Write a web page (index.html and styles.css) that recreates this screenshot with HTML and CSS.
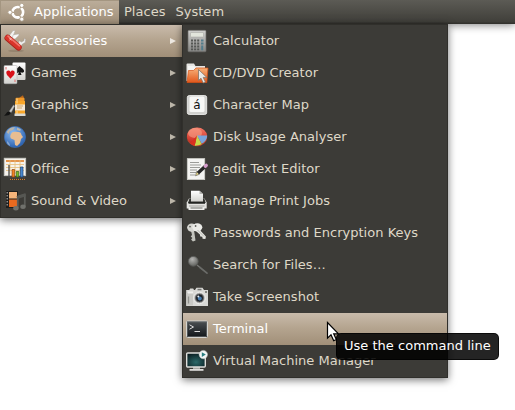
FILE: index.html
```html
<!DOCTYPE html>
<html lang="en">
<head>
<meta charset="utf-8">
<title>Desktop menu</title>
<link rel="stylesheet" href="styles.css">
</head>
<body>
<svg class="defs" width="0" height="0" aria-hidden="true">
  <defs>
    <linearGradient id="red" x1="0" y1="0" x2="0" y2="1"><stop offset="0" stop-color="#f47a68"/><stop offset="1" stop-color="#c42018"/></linearGradient>
    <linearGradient id="orange" x1="0" y1="0" x2="0" y2="1"><stop offset="0" stop-color="#f7b27a"/><stop offset="1" stop-color="#e2571c"/></linearGradient>
    <linearGradient id="grey" x1="0" y1="0" x2="0" y2="1"><stop offset="0" stop-color="#d0d0ce"/><stop offset="1" stop-color="#858583"/></linearGradient>
    <linearGradient id="light" x1="0" y1="0" x2="0" y2="1"><stop offset="0" stop-color="#fff"/><stop offset="1" stop-color="#d2d2ce"/></linearGradient>
    <linearGradient id="dark" x1="0" y1="0" x2="0" y2="1"><stop offset="0" stop-color="#4c5154"/><stop offset="1" stop-color="#101418"/></linearGradient>
    <radialGradient id="lens" cx=".4" cy=".3" r=".7"><stop offset="0" stop-color="#b4b4b2"/><stop offset="1" stop-color="#62635f"/></radialGradient>
    <radialGradient id="blue" cx=".4" cy=".3" r=".75"><stop offset="0" stop-color="#8ebcf0"/><stop offset="1" stop-color="#245bab"/></radialGradient>
    <radialGradient id="teal" cx=".5" cy=".65" r=".7"><stop offset="0" stop-color="#2c6a6a"/><stop offset="1" stop-color="#07181c"/></radialGradient>
  </defs>
</svg>

<header class="panel">
  <div class="panel-item active">
    <svg class="logo" viewBox="0 0 20 20">
      <circle cx="10.8" cy="10.3" r="5.2" fill="none" stroke="#fff" stroke-width="2.900"/>
      <path d="M10.800 10.300H2M10.800 10.300l4.200-7.500M10.800 10.300l4.200 7.500" stroke="#b0a08b" stroke-width="1.200"/>
      <circle cx="10.800" cy="10.300" r="3.700" fill="#b0a08b"/>
      <g fill="#fff" stroke="#b0a08b" stroke-width=".9"><circle cx="3" cy="10.300" r="2.100"/><circle cx="14.800" cy="3.400" r="2.100"/><circle cx="14.800" cy="17.200" r="2.100"/></g>
    </svg>
    <span>Applications</span>
  </div>
  <div class="panel-item">Places</div>
  <div class="panel-item">System</div>
</header>

<nav class="menu main-menu">
  <div class="row selected">
    <svg class="icon" viewBox="0 0 24 24">
      <path d="M6 7l4-5.500q1.500-.5 2 .8L9.500 9z" fill="#f2f2f1" stroke="#a8a39c" stroke-width=".5"/>
      <path d="M9.500 9.500l.5-3.500 5.500-1q1 .8 0 1.800L12 10z" fill="#f8f8f7" stroke="#aaa" stroke-width=".4"/>
      <path d="M15.500 15.500l.5-4 2.500 1.500 2.500-1.500.2-2.500 1.500 1.500-.5 3-3 1.800-1.500 2.700z" fill="#ededeb" stroke="#a09b94" stroke-width=".5"/>
      <ellipse cx="13" cy="21.800" rx="8" ry="1.300" fill="#5b4a3c" opacity=".25"/>
      <path d="M4.700 9L15.500 18.300" stroke="#a3241c" stroke-width="6.400" stroke-linecap="round"/>
      <path d="M4.700 8.700L15.700 18" stroke="#d9342b" stroke-width="5.200" stroke-linecap="round"/>
      <path d="M5 7.200L16.500 16.800" stroke="#f0766b" stroke-width="1.600" stroke-linecap="round"/>
      <path d="M6.300 9.200l2.400 2M8.400 9L6.500 11.400" stroke="#f7c8c0" stroke-width=".8"/>
    </svg>
    <span>Accessories</span><i class="arrow"></i>
  </div>
  <div class="row">
    <svg class="icon" viewBox="0 0 24 24">
      <rect x="9.500" y="1.500" width="13" height="17.500" rx="1" fill="url(#light)"/>
      <path d="M16.500 5c-2 2.500-4 3.300-4 5.300 0 2 2.500 2.200 3.500.8L15 14h3.500l-1-3c1.500 1.400 3.600.7 3.600-1 0-2-2.600-2.800-4.600-5z" fill="#151515"/>
      <rect x="1" y="4.500" width="13" height="18.200" rx="1" fill="url(#light)" stroke="#aaa" stroke-width=".5"/>
      <path d="M7.500 17.700C5 15 3.300 13.700 3.300 11.800c0-2.500 3.100-3 4.200-.8 1.100-2.200 4.200-1.700 4.200.8 0 1.900-1.700 3.200-4.200 5.900z" fill="#d91119"/>
      <path d="M3 6v2.500M12 18.500V21" stroke="#e06a6a"/>
    </svg>
    <span>Games</span><i class="arrow"></i>
  </div>
  <div class="row">
    <svg class="icon" viewBox="0 0 24 24">
      <path d="M1 22.700c2-1 2.500-4.200 5-4.200l1.800 1.500c-.8 2.300-4 2.800-6.800 2.700z" fill="#131313"/>
      <path d="M6.300 18.300L10.500 12l1.200 1-3.500 6.600z" fill="#c9c9c9" stroke="#888" stroke-width=".4"/>
      <path d="M16.500 4.500l3.500-2.300 1.200 3.300h-4.700z" fill="#b8651a"/>
      <rect x="12.500" y="4.800" width="9" height="4" rx="1" fill="#f09a2a"/>
      <rect x="12" y="8" width="10" height="13" fill="#f8a629"/>
      <path d="M12 11.500h10v6H12z" fill="#f4e8d6"/><path d="M14 13h6M14 15h5" stroke="#cda56e"/>
      <path d="M14 5.500v5M14 18v3" stroke="#ffe0a0"/>
      <rect x="11.500" y="20.500" width="11" height="2.500" fill="#d8d8d4"/>
    </svg>
    <span>Graphics</span><i class="arrow"></i>
  </div>
  <div class="row">
    <svg class="icon" viewBox="0 0 24 24">
      <circle cx="12" cy="12" r="10.600" fill="url(#blue)" stroke="#3b70b8" stroke-width=".6"/>
      <path d="M8 9c1-2 3-2.500 6-2 3-.5 4 .500 4.500 3l1.500 2-2 2-1 4-3 3-2-1-.5-5-3.500-1.500c-1-1.500-1-3 0-4.500z" fill="#e8bd91"/>
      <path d="M3.500 7C6 3 9 1.800 12 2.200L10 5 7 6 5.500 9zM14 2.500l4 2-1 1.500-3-1z" fill="#b9b3a8"/>
      <path d="M4 16c2 2 3 3 3 5-2-1-3.500-3-3-5z" fill="#8caad1"/>
    </svg>
    <span>Internet</span><i class="arrow"></i>
  </div>
  <div class="row">
    <svg class="icon" viewBox="0 0 24 24">
      <rect x="1.200" y="1.200" width="21.500" height="17.500" fill="#f6f3ec" stroke="#c8c8c4" stroke-width=".8"/>
      <path d="M3 4h18" stroke="#df7c26" stroke-width="1.600"/>
      <path d="M3 7.500h18M3 10.500h18M3 13.500h18M7 3v14M12 3v14M17 3v14" stroke="#e7bd78" stroke-width=".8"/>
      <path d="M6 8v12h16" fill="none" stroke="#494949" stroke-width="1.300"/>
      <g stroke-width=".7"><path d="M9 12.500h2.600V20H9z" fill="#f28424" stroke="#8f4610"/><path d="M13.200 14.500h2.600V20h-2.600z" fill="#79ba27" stroke="#345c10"/><path d="M17.400 10H20v10h-2.600z" fill="#4a88cf" stroke="#174477"/></g>
      <path d="M7 22.400h15" stroke="#e7872a" stroke-width="1" stroke-dasharray="1 1"/>
    </svg>
    <span>Office</span><i class="arrow"></i>
  </div>
  <div class="row">
    <svg class="icon" viewBox="0 0 24 24">
      <rect x="3" y="2" width="12" height="17" fill="#1e1e1d"/>
      <path d="M4.200 3v15" stroke="#aaa" stroke-width="1.200" stroke-dasharray="1.500 1.500"/>
      <path d="M6 3h8v6.500H6z" fill="#f5b47a"/><path d="M6 10.500h8V18H6z" fill="#e96a1f"/>
      <path d="M14.800 19V8l7-2.300v12" fill="none" stroke="#5c5d59" stroke-width="1.800"/>
      <path d="M14 8.500l8.500-2.700" stroke="#565753" stroke-width="3"/>
      <ellipse cx="12.900" cy="19.300" rx="2.700" ry="2.200" fill="#70716c"/><ellipse cx="20" cy="17.800" rx="2.700" ry="2.200" fill="#70716c"/>
    </svg>
    <span>Sound &amp; Video</span><i class="arrow"></i>
  </div>
</nav>

<nav class="menu sub-menu">
  <div class="row">
    <svg class="icon" viewBox="0 0 24 24">
      <rect x="3" y="1.300" width="18" height="21.500" rx="1" fill="url(#grey)" stroke="#6b6b69" stroke-width=".7"/>
      <rect x="5.500" y="3.500" width="13" height="4.500" rx=".5" fill="#e2e5dc" stroke="#a2a29e" stroke-width=".5"/>
      <path d="M6 11.500h9M6 14.500h9M6 17.500h9M6 20.300h9" stroke="#555754" stroke-width="1.800" stroke-dasharray="2 1.100"/>
      <path d="M16 11.500h2.500M16 14.500h2.500M17.200 16.600v4.600" stroke="#527d8c" stroke-width="2"/>
    </svg>
    <span>Calculator</span>
  </div>
  <div class="row">
    <svg class="icon" viewBox="0 0 24 24">
      <path d="M1.500 20V3.500q0-1 1-1H9l1.500 2.500H20v15z" fill="#e6e5e2"/>
      <path d="M3 5h6l1.500 2H20v8H3z" fill="#f5f5f4"/>
      <path d="M2 21.500L3.500 9.500h5L11 7h12l-1.200 14.500z" fill="url(#orange)" stroke="#d95013" stroke-width=".7"/>
      <path d="M13.500 8.500v11l2.500-2.300 2.200 4.800 2.200-1-2.200-4.600h3.600z" fill="#e9e9e7" stroke="#807468" stroke-width=".8"/>
    </svg>
    <span>CD/DVD Creator</span>
  </div>
  <div class="row">
    <svg class="icon" viewBox="0 0 24 24">
      <rect x="2.300" y="2.500" width="19.400" height="19" rx="2" fill="#d2d2cf" stroke="#f7f7f5" stroke-width=".8"/>
      <rect x="4.500" y="3.500" width="15" height="15.500" rx="1.500" fill="#f7f7f5"/>
      <text class="glyph" x="8.300" y="16">á</text>
    </svg>
    <span>Character Map</span>
  </div>
  <div class="row">
    <svg class="icon" viewBox="0 0 24 24">
      <ellipse cx="12" cy="12" rx="10.200" ry="9.300" fill="#b8412c"/>
      <ellipse cx="12" cy="11" rx="10" ry="8.500" fill="url(#red)"/>
      <ellipse cx="10" cy="8" rx="7" ry="5" fill="#f9a287" opacity=".6"/>
      <path d="M12 10.500h10.200c0 3.500-2 6.500-5.500 8.300z" fill="#7aa5dd"/>
      <path d="M12 10.500l4.700 8.800q-3.500 1.600-7 1.400z" fill="#c4d94a"/>
      <path d="M12 10.500L9.700 20.800q-3-.5-4.500-2.300z" fill="#d9301f"/>
    </svg>
    <span>Disk Usage Analyser</span>
  </div>
  <div class="row">
    <svg class="icon" viewBox="0 0 24 24">
      <rect x="2.300" y="1.600" width="17.400" height="21" fill="#f4f4f2" stroke="#cfcfca" stroke-width=".8"/>
      <path d="M5 5.500h9M5 8h11M5 10.500h10M5 13h7M5 15.500h6M5 18h5" stroke="#9b9c98" stroke-width="1"/>
      <path d="M10.500 18.800l1.200-4.300 2.600 2.800z" fill="#e8d88a" stroke="#333" stroke-width=".5"/>
      <path d="M13 15.900l7-6.400" stroke="#272727" stroke-width="3.400"/>
      <path d="M20.300 9.200l.9-.8" stroke="#d59ccb" stroke-width="3.400" stroke-linecap="round"/>
    </svg>
    <span>gedit Text Editor</span>
  </div>
  <div class="row">
    <svg class="icon" viewBox="0 0 24 24">
      <path d="M4 9.500h15.500l2.200 4v6H1.700v-6z" fill="#e3e3e0"/>
      <path d="M4.500 9.500h14.800l1.500 4.500H3z" fill="#333431"/>
      <path d="M6 12.500V1.800h8.500L18 5v7.500z" fill="url(#light)"/><path d="M14.500 1.800V5H18z" fill="#b5b5b2"/>
      <path d="M3.500 14h16.500" stroke="#1e1f1d" stroke-width="1.500"/>
      <path d="M4 17h15.500" stroke="#a6a6a2"/><path d="M3.500 18.500h16V21h-16z" fill="#efefed"/><path d="M5.500 19h12" stroke="#6f706c"/>
    </svg>
    <span>Manage Print Jobs</span>
  </div>
  <div class="row">
    <svg class="icon" viewBox="0 0 24 24">
      <path d="M9 9l1.500 10.500-2.600 1-1.800-2 1.300-1.400-1.700-1.600 1.300-1.500L5.800 9z" fill="#c3c4bd"/>
      <ellipse cx="6.700" cy="6.600" rx="4.600" ry="4.100" fill="#d6d6d1"/>
      <path d="M13 7l7.900 8.500-.5 2.500-2.800-.2-.3-2-2-.2-.4-2-4-3.600z" fill="#e5e5e0"/>
      <ellipse cx="12.300" cy="6.300" rx="5" ry="4" fill="#ebebe7"/>
      <circle cx="5" cy="5.600" r=".9" fill="#5f605a"/><circle cx="10.600" cy="5" r=".9" fill="#5f605a"/>
      <path d="M12.500 9l6.500 6.500" stroke="#aaaba5" stroke-width=".8"/>
    </svg>
    <span>Passwords and Encryption Keys</span>
  </div>
  <div class="row">
    <svg class="icon" viewBox="0 0 24 24">
      <path d="M12 12l3 2.600" stroke="#777875" stroke-width="1.300"/>
      <path d="M15 14.500l7 5.700" stroke="#6b6c69" stroke-width="1.700" stroke-linecap="round"/>
      <circle cx="8.300" cy="8.300" r="4.900" fill="url(#lens)" stroke="#5b5c59" stroke-width=".8"/>
    </svg>
    <span>Search for Files…</span>
  </div>
  <div class="row">
    <svg class="icon" viewBox="0 0 24 24">
      <path d="M1.200 5h3l1-1.500h3L9 5h1l1.500-2.200h6L19 5h4v16H1.200z" fill="#d9d9d6"/>
      <path d="M1.500 8H8v12.500H1.500z" fill="#c8c8c4"/><path d="M12.500 3.800h4v1.500h-4z" fill="#747572"/>
      <path d="M3 6.500h5v2H3z" fill="#efefed"/><path d="M3.500 11.500v7" stroke="#92938f" stroke-width="1.300"/>
      <circle cx="14.500" cy="13" r="5.800" fill="#b2b2b0" stroke="#f0f0ee" stroke-width="1"/>
      <circle cx="14.500" cy="13" r="4" fill="#1a2027" stroke="#666" stroke-width=".8"/>
      <circle cx="14.800" cy="13.500" r="2" fill="#4479ad"/><circle cx="13.300" cy="11.500" r="1" fill="#e4eef8"/>
      <path d="M20 6h2v2h-2z" fill="#82837f"/>
    </svg>
    <span>Take Screenshot</span>
  </div>
  <div class="row selected">
    <svg class="icon" viewBox="0 0 24 24">
      <rect x="1.500" y="4" width="21" height="16.500" rx="1" fill="url(#dark)" stroke="#d4d4d0" stroke-width="1"/>
      <rect x="2.500" y="5" width="19" height="14.500" fill="none" stroke="#666a6c" stroke-width=".7"/>
      <path d="M4.500 7.800l4 2.200-4 2.200M9.500 14.500H15" fill="none" stroke="#dcdcdc" stroke-width="1"/>
    </svg>
    <span>Terminal</span>
  </div>
  <div class="row">
    <svg class="icon" viewBox="0 0 24 24">
      <path d="M8 18h7v2.500H8z" fill="#aaaba7"/><path d="M4.500 20h14v1.800h-14z" fill="#dededb"/>
      <rect x="1.700" y="4" width="18.600" height="14" rx="1" fill="url(#teal)" stroke="#dededb" stroke-width="1.400"/>
      <circle cx="18.300" cy="5.600" r="4.200" fill="#f3f6f5" stroke="#c2c8c5" stroke-width=".5"/>
      <path d="M16.800 3.200v4.800l4-2.400z" fill="#287e80"/>
    </svg>
    <span>Virtual Machine Manager</span>
  </div>
</nav>

<svg class="cursor" viewBox="0 0 14 21"><path d="M1.500 1.500v15.700l3.500-3.400 2.700 5.900 2.600-1.200-2.600-5.700h4.800z" fill="#fff" stroke="#000" stroke-width="1.200"/></svg>
<div class="tooltip">Use the command line</div>
</body>
</html>
```
FILE: styles.css
```css
* { box-sizing: border-box; }

body {
  margin: 0;
  width: 515px;
  height: 410px;
  overflow: hidden;
  position: relative;
  background: #fff;
  color: #dfd8c8;
  font: 13px/16px "DejaVu Sans", sans-serif;
  letter-spacing: .02px;
  white-space: nowrap;
  cursor: default;
}

.defs { position: absolute; }

.panel {
  display: flex;
  height: 24px;
  background: linear-gradient(#5c5b55, #403f3a 22px, #33322e 23px);
  box-shadow: 0 1px 8px rgba(0, 0, 0, .5);
}

.panel-item {
  display: flex;
  align-items: center;
  padding: 0 5px 1px;
}

.panel-item.active {
  width: 119px;
  padding: 0 0 1px 7px;
  gap: 7px;
  color: #fff;
  background: linear-gradient(#bcae9b, #a08f79);
  box-shadow: inset 1px 1px #a49681;
}

.logo { width: 20px; height: 20px; flex: none; }

.menu {
  position: absolute;
  top: 24px;
  border: 1px solid #302f2b;
  background: #3c3b37;
  box-shadow: 0 2px 8px rgba(0, 0, 0, .55);
}

.main-menu { left: 0; width: 183px; }
.sub-menu { left: 182px; width: 266px; }

.row {
  display: flex;
  align-items: center;
  gap: 4px;
  height: 32px;
  padding: 0 6px 0 2px;
}

.row span { padding-bottom: 1px; }

.row.selected {
  color: #fff;
  background: linear-gradient(#c9bbab, #b5a590 45%, #a18f78);
}

.icon { width: 24px; height: 24px; flex: none; }

.glyph { font: 12px "DejaVu Sans", sans-serif; fill: #111; }

.arrow {
  margin-left: auto;
  border: solid transparent;
  border-width: 3px 0 3px 6px;
  border-left-color: #bdb7aa;
}

.selected .arrow { border-left-color: #eee9e2; }

.tooltip {
  position: absolute;
  left: 336px;
  top: 333px;
  width: 163px;
  height: 27px;
  padding: 4px 7px;
  border: 1px solid rgba(0, 0, 0, .7);
  border-radius: 5px;
  background: rgba(0, 0, 0, .86);
  color: #fff;
}

.cursor {
  position: absolute;
  left: 326px;
  top: 321px;
  width: 14px;
  height: 21px;
}
```
